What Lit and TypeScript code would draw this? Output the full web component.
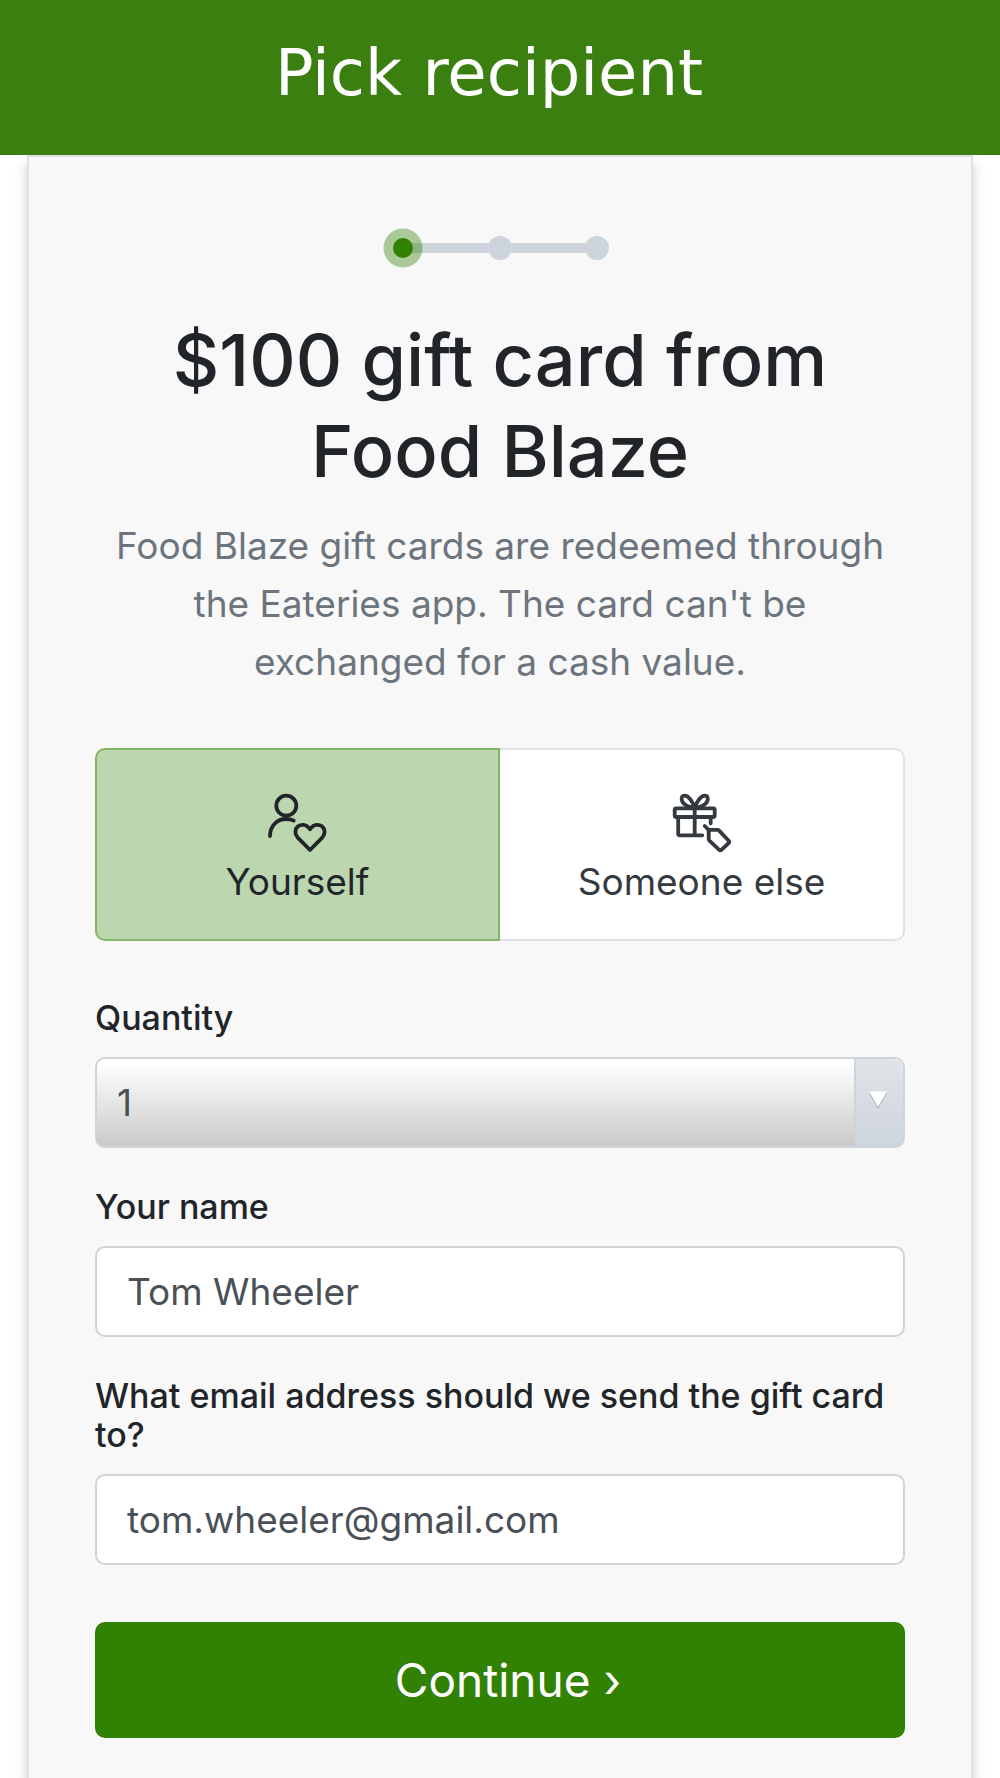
import { LitElement, html, css, svg } from "lit";
import { customElement, state } from "lit/decorators.js";

type Recipient = "yourself" | "someone";

const selfIcon = svg`
  <circle cx="20.3" cy="13.7" r="10" />
  <path d="M4 44C4 34 11 27 20 27C23 27 25.5 27.5 27.7 28.7" />
  <path d="M44 58L31.5 45.3C28.5 42 28.8 37 32 34.3C35.5 31.8 40 32.6 42.5 35.4L44 37.2L45.5 35.4C48 32.6 52.5 31.8 56 34.3C59.2 37 59.5 42 56.5 45.3Z" />
`;

const giftIcon = svg`
  <rect x="4.7" y="16.3" width="40" height="8.7" rx="1.5" />
  <path d="M8.2 25V41.8Q8.2 43.3 9.7 43.3H32.3M24.7 16.3V43.3M40.7 25V31.3" />
  <path d="M24.7 16C22.5 9 18.5 3.7 14.5 3.7C11.3 3.7 11 7.5 12.5 10C14.3 13 19 15.2 24.7 16Z" />
  <path d="M24.7 16C26.9 9 30.9 3.7 34.9 3.7C38.1 3.7 38.4 7.5 36.9 10C35.1 13 30.4 15.2 24.7 16Z" />
  <path d="M34.7 34L38.6 37.8M40 37.9H47.4Q48.4 37.9 49.1 38.6L58.7 48.8Q59.7 50 58.7 51L51.4 57.8Q50.3 58.8 49.2 57.8L39.4 48.6Q38.7 47.9 38.7 47V39.2Q38.7 37.9 40 37.9Z" />
`;

@customElement("app-root")
export class AppRoot extends LitElement {
  @state() private recipient: Recipient = "yourself";

  static styles = css`
    :host {
      display: flex;
      flex-direction: column;
      min-height: 100vh;
      background: #fff;
      color: #212529;
      font-family: Inter, "Liberation Sans", sans-serif;
    }
    * {
      box-sizing: border-box;
    }
    h1, h2, p {
      margin: 0;
    }
    .bar {
      padding: 33px 22px 42px 0;
      background: #3b7f11;
      color: #fff;
      text-align: center;
    }
    .bar-title {
      font: 400 64px/80px "DejaVu Sans", sans-serif;
    }
    .card {
      flex: 1;
      display: flex;
      flex-direction: column;
      margin: 0 27px;
      padding: 71px 66px 40px;
      border: 2px solid #dee2e6;
      border-bottom: 0;
      background: #f8f8f8;
      box-shadow: 0 8px 12px rgba(0, 0, 0, 0.2);
    }
    .steps {
      display: block;
      align-self: center;
      width: 234px;
      height: 40px;
    }
    .heading {
      margin-top: 46px;
      font-size: 72px;
      line-height: 91px;
      font-weight: 500;
      text-align: center;
    }
    .note {
      margin-top: 21px;
      font-size: 37px;
      line-height: 58px;
      color: #6c757d;
      text-align: center;
    }
    .options {
      display: grid;
      grid-template-columns: 1fr 1fr;
      margin-top: 57px;
    }
    .option {
      display: flex;
      flex-direction: column;
      align-items: center;
      padding: 42px 10px 32px;
      border: 2px solid #dee2e6;
      background: #fff;
      color: #343a40;
      font: 400 37px/51px Inter, "Liberation Sans", sans-serif;
    }
    .option:first-child {
      border-radius: 10px 0 0 10px;
    }
    .option:last-child {
      border-radius: 0 10px 10px 0;
      border-left-width: 0;
    }
    .option.selected {
      border-color: #84b567;
      background: #bcd6af;
      color: #212529;
    }
    .icon {
      width: 64px;
      height: 64px;
      fill: none;
      stroke: currentColor;
      stroke-width: 3.8;
      stroke-linecap: round;
      stroke-linejoin: round;
    }
    .form {
      display: flex;
      flex-direction: column;
      gap: 39px;
      margin-top: 57px;
    }
    .field {
      display: flex;
      flex-direction: column;
      gap: 20px;
    }
    .label {
      font-size: 34px;
      line-height: 39px;
      font-weight: 500;
    }
    .control {
      width: 100%;
      height: 91px;
      padding: 0 30px;
      border: 2px solid #ced4da;
      border-radius: 10px;
      background: #fff;
      color: #495057;
      font: 400 37px/56px Inter, "Liberation Sans", sans-serif;
    }
    .picker {
      position: relative;
      display: flex;
    }
    .select {
      appearance: none;
      padding: 0 70px 0 20px;
      background: linear-gradient(#fff 5%, #ccc 95%);
    }
    .arrow {
      position: absolute;
      top: 2px;
      right: 2px;
      bottom: 2px;
      display: flex;
      align-items: center;
      justify-content: center;
      width: 49px;
      padding: 0 4px 6px 0;
      border-left: 2px solid #ced4da;
      border-radius: 0 8px 8px 0;
      background: linear-gradient(#e1e5e9, #ced4dc);
      pointer-events: none;
    }
    .arrow svg {
      width: 20px;
      height: 28px;
    }
    .submit {
      height: 116px;
      margin-top: 18px;
      padding: 0 0 0 16px;
      border: 0;
      border-radius: 10px;
      background: #318203;
      color: #fff;
      font: 400 46px/58px Inter, "Liberation Sans", sans-serif;
    }
  `;

  private renderOption(id: Recipient, text: string, icon: unknown) {
    const on = this.recipient === id;
    return html`
      <button
        type="button"
        class="option ${on ? "selected" : ""}"
        aria-pressed=${on ? "true" : "false"}
        @click=${() => (this.recipient = id)}
      >
        <svg class="icon" viewBox="0 0 64 64" aria-hidden="true">${icon}</svg>
        <span>${text}</span>
      </button>
    `;
  }

  render() {
    return html`
      <header class="bar"><h1 class="bar-title">Pick recipient</h1></header>
      <main class="card">
        <svg class="steps" viewBox="0 0 234 40" aria-hidden="true">
          <path d="M20 20H214" stroke="#ced4dc" stroke-width="10" />
          <circle cx="117" cy="20" r="12" fill="#ced4dc" />
          <circle cx="214" cy="20" r="12" fill="#ced4dc" />
          <circle cx="20" cy="20" r="19.5" fill="#318203" fill-opacity="0.4" />
          <circle cx="20" cy="20" r="10" fill="#318203" />
        </svg>
        <h2 class="heading">$100 gift card from Food Blaze</h2>
        <p class="note">
          Food Blaze gift cards are redeemed through the Eateries app. The card
          can't be exchanged for a cash value.
        </p>
        <div class="options">
          ${this.renderOption("yourself", "Yourself", selfIcon)}
          ${this.renderOption("someone", "Someone else", giftIcon)}
        </div>
        <form class="form" @submit=${(e: Event) => e.preventDefault()}>
          <div class="field">
            <label class="label" for="quantity">Quantity</label>
            <div class="picker">
              <select class="control select" id="quantity">
                <option>1</option>
                <option>2</option>
                <option>3</option>
              </select>
              <span class="arrow">
                <svg viewBox="0 0 20 28" aria-hidden="true">
                  <path d="M1 7H19L10 23Z" fill="#a9adb1" />
                  <path d="M1 5.5H19L10 21Z" fill="#fff" />
                </svg>
              </span>
            </div>
          </div>
          <div class="field">
            <label class="label" for="name">Your name</label>
            <input class="control" id="name" type="text" value="Tom Wheeler" />
          </div>
          <div class="field">
            <label class="label" for="email">What email address should we send the gift card to?</label>
            <input class="control" id="email" type="email" value="tom.wheeler@gmail.com" />
          </div>
          <button class="submit" type="submit">Continue ›</button>
        </form>
      </main>
    `;
  }
}
